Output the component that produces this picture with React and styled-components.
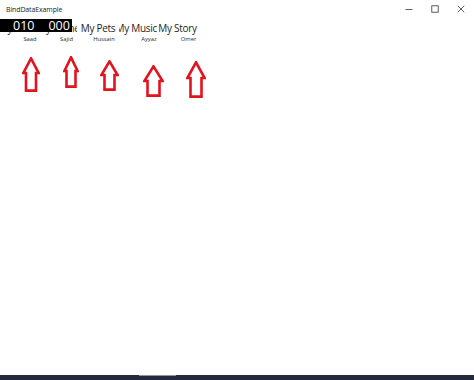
import React from "react";
import styled, { createGlobalStyle } from "styled-components";

const Global = createGlobalStyle`
  html, body { margin: 0; padding: 0; background: #ffffff; }
  body { font-family: "Open Sans", "Noto Sans", sans-serif; }
  #root { width: 474px; height: 380px; }
`;

const Window = styled.div`
  width: 474px;
  height: 380px;
  display: flex;
  flex-direction: column;
  background: #ffffff;
  overflow: hidden;
`;

const TitleBar = styled.div`
  height: 18px;
  flex: none;
  display: flex;
  align-items: center;
  justify-content: space-between;
  padding-left: 6px;
`;

const Title = styled.span`
  font-size: 7px;
  color: #1a1a1a;
  letter-spacing: -0.12px;
`;

const Controls = styled.div`
  display: flex;
  height: 18px;
`;

const ControlButton = styled.div`
  width: 26px;
  height: 18px;
  display: flex;
  align-items: center;
  justify-content: center;
`;

const Content = styled.div`
  position: relative;
  flex: 1;
  display: flex;
  flex-direction: column;
`;

const Counter = styled.div`
  position: absolute;
  left: 0;
  top: 1px;
  width: 72px;
  height: 13px;
  background: #000000;
  color: #ffffff;
  display: flex;
  align-items: center;
  font-size: 12.5px;
  line-height: 13px;
  z-index: 2;
`;

const Digits = styled.span`
  margin-left: ${(p) => p.$left}px;
`;

const TitleRow = styled.div`
  display: flex;
  margin-top: 3px;
  height: 14px;
`;

const TitleCell = styled.div`
  width: ${(p) => p.$w}px;
  overflow: hidden;
  display: flex;
  justify-content: ${(p) => p.$align || "center"};
  white-space: nowrap;
  font-size: 10px;
  letter-spacing: -0.3px;
  line-height: 14px;
  color: #1e1e1e;
`;

const LabelRow = styled.div`
  display: flex;
  padding-left: 12px;
  height: 8px;
`;

const LabelCell = styled.div`
  width: ${(p) => p.$w}px;
  text-align: center;
  font-size: 5.8px;
  line-height: 8px;
  color: #2a2a2a;
  white-space: nowrap;
`;

const ArrowRow = styled.div`
  display: flex;
  align-items: flex-start;
  margin-top: 13px;
`;

const ArrowCell = styled.div`
  margin-left: ${(p) => p.$gap}px;
  margin-top: ${(p) => p.$drop}px;
  display: flex;
`;

const Taskbar = styled.div`
  height: 5px;
  flex: none;
  background: #232a3b;
  display: flex;
`;

const TaskItem = styled.div`
  margin-left: 139px;
  width: 37px;
  height: 1px;
  background: #8b94a6;
`;

function UpArrow({ w, h, head, shaft }) {
  const s1 = (w - shaft) / 2;
  const s2 = s1 + shaft;
  const pts = [
    [w / 2, 1.4],
    [w - 1.4, head],
    [s2, head],
    [s2, h - 1.4],
    [s1, h - 1.4],
    [s1, head],
    [1.4, head],
  ]
    .map((p) => p.join(","))
    .join(" ");
  return (
    <svg width={w} height={h} viewBox={`0 0 ${w} ${h}`}>
      <polygon
        points={pts}
        fill="#ffffff"
        stroke="#e3121f"
        strokeWidth="2.6"
        strokeLinejoin="miter"
      />
    </svg>
  );
}

const titles = [
  { w: 40, t: "My Movie" },
  { w: 37, t: "My Game" },
  { w: 42, t: "My Pets" },
  { w: 38, t: "My Music", align: "flex-end" },
  { w: 41, t: "My Story" },
];

const labels = [
  { w: 36, t: "Saad" },
  { w: 37, t: "Sajid" },
  { w: 38, t: "Hussain" },
  { w: 52, t: "Ayyaz" },
  { w: 27, t: "Omer" },
];

const arrows = [
  { gap: 22, drop: 1, w: 18, h: 35, head: 16, shaft: 10 },
  { gap: 23, drop: 0, w: 16, h: 32, head: 15, shaft: 9 },
  { gap: 21, drop: 4, w: 19, h: 31, head: 15, shaft: 10 },
  { gap: 24, drop: 9, w: 21, h: 32, head: 16, shaft: 12 },
  { gap: 22, drop: 5, w: 20, h: 37, head: 17, shaft: 11 },
];

export default function App() {
  return (
    <>
      <Global />
      <Window>
        <TitleBar>
          <Title>BindDataExample</Title>
          <Controls>
            <ControlButton>
              <svg width="8" height="8" viewBox="0 0 8 8">
                <line x1="0.5" y1="4.5" x2="7.5" y2="4.5" stroke="#333" strokeWidth="0.8" />
              </svg>
            </ControlButton>
            <ControlButton>
              <svg width="8" height="8" viewBox="0 0 8 8">
                <rect x="0.8" y="0.8" width="6.4" height="6.4" fill="none" stroke="#333" strokeWidth="0.8" />
              </svg>
            </ControlButton>
            <ControlButton>
              <svg width="8" height="8" viewBox="0 0 8 8">
                <line x1="0.8" y1="0.8" x2="7.2" y2="7.2" stroke="#333" strokeWidth="0.8" />
                <line x1="7.2" y1="0.8" x2="0.8" y2="7.2" stroke="#333" strokeWidth="0.8" />
              </svg>
            </ControlButton>
          </Controls>
        </TitleBar>
        <Content>
          <Counter>
            <Digits $left={13}>010</Digits>
            <Digits $left={14}>000</Digits>
          </Counter>
          <TitleRow>
            {titles.map((t) => (
              <TitleCell key={t.t} $w={t.w} $align={t.align}>
                {t.t}
              </TitleCell>
            ))}
          </TitleRow>
          <LabelRow>
            {labels.map((l) => (
              <LabelCell key={l.t} $w={l.w}>
                {l.t}
              </LabelCell>
            ))}
          </LabelRow>
          <ArrowRow>
            {arrows.map((a, i) => (
              <ArrowCell key={i} $gap={a.gap} $drop={a.drop}>
                <UpArrow w={a.w} h={a.h} head={a.head} shaft={a.shaft} />
              </ArrowCell>
            ))}
          </ArrowRow>
        </Content>
        <Taskbar>
          <TaskItem />
        </Taskbar>
      </Window>
    </>
  );
}
